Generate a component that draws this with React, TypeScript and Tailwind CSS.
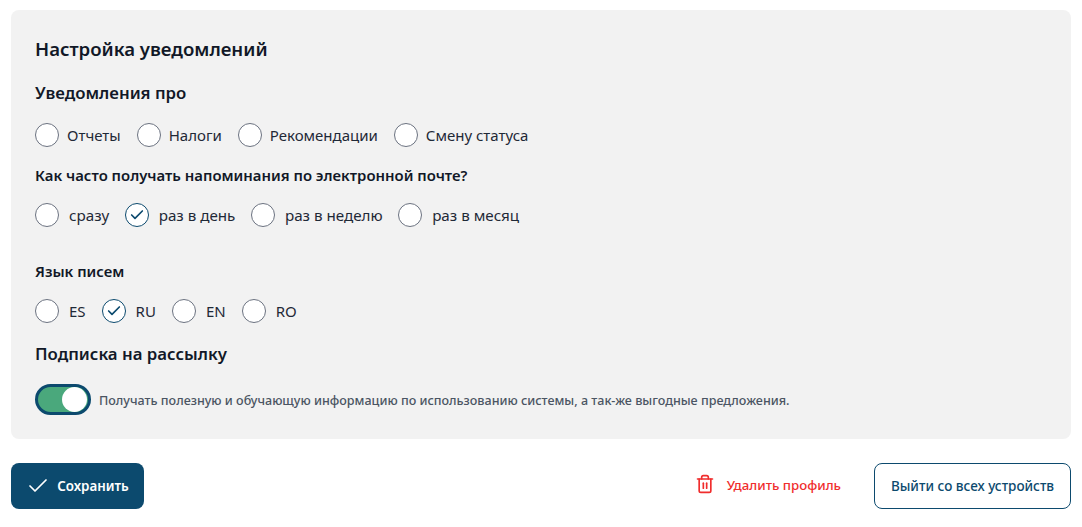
import { Check, Trash2 } from "lucide-react";

const font = "font-['Noto_Sans','Open_Sans',sans-serif]";

function Radio({
  label,
  checked,
  gap = "gap-2",
  size = "text-[15px]",
}: {
  label: string;
  checked?: boolean;
  gap?: string;
  size?: string;
}) {
  return (
    <label className={`flex items-center ${gap}`}>
      <span
        className={`flex h-6 w-6 items-center justify-center rounded-full bg-white ${
          checked ? "border-[1.5px] border-[#0c4a6e]" : "border border-[#6b7280]"
        }`}
      >
        {checked && <Check className="h-4 w-4 text-[#0c4a6e]" strokeWidth={2.5} aria-hidden />}
      </span>
      <span className={`${size} leading-5 text-[#1f2937]`}>{label}</span>
    </label>
  );
}

export default function App() {
  return (
    <div className={`h-[527px] w-[1082px] overflow-hidden bg-white px-[11px] pt-[10px] ${font}`}>
      <section className="h-[429px] rounded-lg bg-[#f2f2f2] px-6 pt-[26px]">
        <h2 className="text-[18.6px] font-semibold leading-[26px] text-[#111827]">Настройка уведомлений</h2>

        <h3 className="mt-[19px] text-[16.8px] font-semibold leading-6 text-[#111827]">Уведомления про</h3>
        <div className="mt-[18px] flex gap-4">
          <Radio label="Отчеты" />
          <Radio label="Налоги" />
          <Radio label="Рекомендации" />
          <Radio label="Смену статуса" />
        </div>

        <h4 className="mt-[18px] text-[14.9px] font-semibold leading-5 text-[#111827]">
          Как часто получать напоминания по электронной почте?
        </h4>
        <div className="mt-[18px] flex gap-[15.5px]">
          <Radio label="сразу" gap="gap-2.5" size="text-[15.2px]" />
          <Radio label="раз в день" checked gap="gap-2.5" size="text-[15.2px]" />
          <Radio label="раз в неделю" gap="gap-2.5" size="text-[15.2px]" />
          <Radio label="раз в месяц" gap="gap-2.5" size="text-[15.2px]" />
        </div>

        <h4 className="mt-[34px] text-[14.9px] font-semibold leading-5 text-[#111827]">Язык писем</h4>
        <div className="mt-[18px] flex gap-4">
          <Radio label="ES" gap="gap-2.5" />
          <Radio label="RU" checked gap="gap-2.5" />
          <Radio label="EN" gap="gap-2.5" />
          <Radio label="RO" gap="gap-2.5" />
        </div>

        <h3 className="mt-[19px] text-[16.8px] font-semibold leading-6 text-[#111827]">Подписка на рассылку</h3>
        <div className="mt-[18px] flex items-center gap-2">
          <span className="flex h-[31px] w-14 items-center justify-end rounded-full border-[3px] border-[#0c4a6e] bg-[#4aa87c] pr-px">
            <span className="h-[25px] w-[25px] rounded-full bg-white" />
          </span>
          <span className="mt-[3px] text-[12.55px] font-medium leading-4 text-[#4b5563]">
            Получать полезную и обучающую информацию по использованию системы, а так-же выгодные предложения.
          </span>
        </div>
      </section>

      <div className="mt-6 flex items-center justify-between">
        <button className="flex h-[46px] w-[133px] items-center justify-center gap-[7px] rounded-lg bg-[#0c4a6e] text-[13.4px] font-semibold text-white">
          <Check className="h-6 w-6" strokeWidth={1.75} aria-hidden />
          Сохранить
        </button>
        <div className="flex items-center gap-[33px]">
          <button className="flex items-center gap-3 text-[13.25px] font-medium text-[#f02d2d]">
            <Trash2 className="-mt-1 h-5 w-5" strokeWidth={2} aria-hidden />
            Удалить профиль
          </button>
          <button className="h-[46px] w-[197px] rounded-lg border border-[#0c4a6e] bg-white text-[13.5px] font-medium text-[#0c4a6e]">
            Выйти со всех устройств
          </button>
        </div>
      </div>
    </div>
  );
}
